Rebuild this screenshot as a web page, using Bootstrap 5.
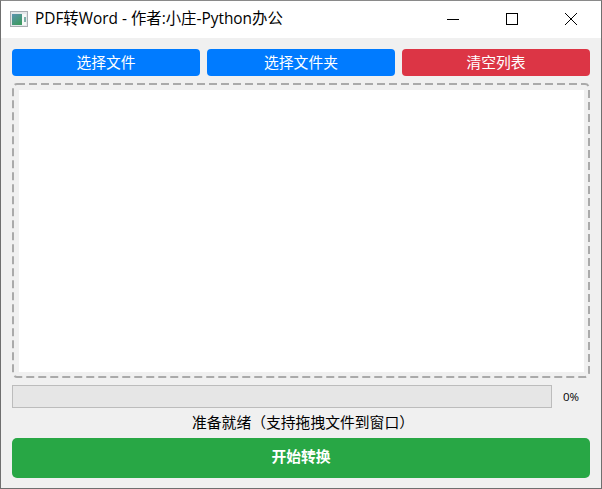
<!DOCTYPE html>
<html lang="zh-CN">
<head>
<meta charset="utf-8">
<title>PDF转Word</title>
<link href="https://cdn.jsdelivr.net/npm/bootstrap@5.3.0/dist/css/bootstrap.min.css" rel="stylesheet">
<style>
html,body{height:100%;margin:0;background:#f0f0f0;}
body{font-family:"Open Sans","Noto Sans CJK SC",sans-serif;font-size:15px;color:#000;}
.appwin{height:489px;width:602px;border:1px solid #6f6f6f;border-top-color:#8a8a8a;background:#f0f0f0;}
.titlebar{height:37px;background:#fff;flex:none;}
.titletext{font-size:15.4px;line-height:20px;margin-left:7px;margin-top:-2px;}
.appicon{margin-left:9px;margin-top:-1px;}
.winbtn{width:59px;height:37px;}
.winbtn svg{display:block;}
.winctl{margin-top:-2px;margin-right:1px;}
.mainarea{padding:11px 11px 11px 11px;}
.toolbtn{height:27px;padding:0 0 2px;border:0;border-radius:4px;font-size:14.8px;line-height:25px;color:#fff;width:188px;font-family:"Noto Sans CJK SC",sans-serif;}
.toolbtn.blue,.toolbtn.blue:hover{background:#007bff;color:#fff;}
.toolbtn.redb,.toolbtn.redb:hover{background:#dc3545;color:#fff;}
.dropzone{height:295px;margin-top:7px;padding:7px 6px 6px 7px;}
.dashframe{top:0;left:0;width:100%;height:100%;}
.dropinner{background:#fff;height:100%;}
.progrow{margin-top:7px;height:24px;}
.progbar{width:540px;height:23px;border:1px solid #bcbcbc;border-radius:0;background:#e6e6e6;}
.progpct{font-size:11.5px;margin-left:11px;line-height:24px;}
.statustext{height:29px;line-height:25px;text-align:center;font-size:14.8px;margin-top:0;padding-left:4px;font-family:"Noto Sans CJK SC",sans-serif;}
.gobtn,.gobtn:hover{height:40px;width:578px;background:#28a745;color:#fff;border:0;border-radius:5px;padding:0 0 3px 0;font-weight:700;font-size:14.8px;font-family:"Noto Sans CJK SC",sans-serif;}
</style>
</head>
<body>
<div class="appwin d-flex flex-column">
  <div class="titlebar d-flex align-items-center">
    <svg class="appicon" width="18" height="16" viewBox="0 0 18 16" aria-hidden="true">
      <defs><linearGradient id="ig" x1="0" y1="0" x2="0.6" y2="1"><stop offset="0" stop-color="#5b93b0"/><stop offset="1" stop-color="#3f9a63"/></linearGradient></defs>
      <rect x=".5" y=".5" width="17" height="15" fill="#e4e7ea" stroke="#a9adb2"/>
      <rect x="2" y="3" width="10" height="11" fill="url(#ig)"/>
      <rect x="12" y="3" width="4" height="11" fill="#f6f8f8"/>
      <rect x="14" y="6" width="2" height="5" fill="#7fb0a8"/>
    </svg>
    <span class="titletext">PDF转Word - 作者:小庄-Python办公</span>
    <div class="ms-auto d-flex winctl">
      <div class="winbtn d-flex align-items-center justify-content-center"><svg width="12" height="12" viewBox="0 0 12 12"><path d="M0 6.5H12" stroke="#000" fill="none"/></svg></div>
      <div class="winbtn d-flex align-items-center justify-content-center"><svg width="12" height="12" viewBox="0 0 12 12"><rect x=".5" y=".5" width="11" height="11" stroke="#000" fill="none"/></svg></div>
      <div class="winbtn d-flex align-items-center justify-content-center"><svg width="12" height="12" viewBox="0 0 12 12"><path d="M0 0L12 12M12 0L0 12" stroke="#000" fill="none"/></svg></div>
    </div>
  </div>
  <div class="mainarea flex-grow-1 d-flex flex-column">
    <div class="d-flex justify-content-between">
      <button class="btn toolbtn blue">选择文件</button>
      <button class="btn toolbtn blue">选择文件夹</button>
      <button class="btn toolbtn redb">清空列表</button>
    </div>
    <div class="dropzone position-relative">
      <svg class="dashframe position-absolute" viewBox="0 0 578 295" aria-hidden="true"><rect x="1" y="1" width="576" height="293" rx="4" fill="none" stroke="#aaa" stroke-width="2" stroke-dasharray="8 4"/></svg>
      <div class="dropinner"></div>
    </div>
    <div class="progrow d-flex align-items-start">
      <div class="progress progbar"></div>
      <span class="progpct">0%</span>
    </div>
    <div class="statustext">准备就绪（支持拖拽文件到窗口）</div>
    <button class="btn gobtn">开始转换</button>
  </div>
</div>
</body>
</html>
